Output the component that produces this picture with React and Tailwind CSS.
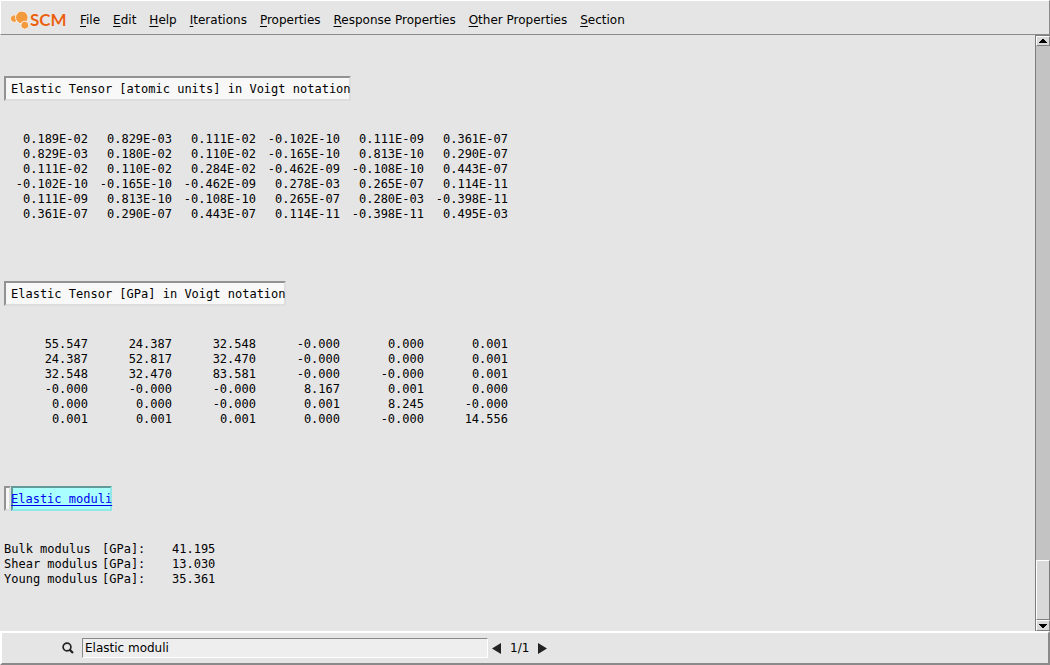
import { useState } from 'react';

const menus = [
  'File',
  'Edit',
  'Help',
  'Iterations',
  'Properties',
  'Response Properties',
  'Other Properties',
  'Section',
];

const atomicUnits = [
  ['0.189E-02', '0.829E-03', '0.111E-02', '-0.102E-10', '0.111E-09', '0.361E-07'],
  ['0.829E-03', '0.180E-02', '0.110E-02', '-0.165E-10', '0.813E-10', '0.290E-07'],
  ['0.111E-02', '0.110E-02', '0.284E-02', '-0.462E-09', '-0.108E-10', '0.443E-07'],
  ['-0.102E-10', '-0.165E-10', '-0.462E-09', '0.278E-03', '0.265E-07', '0.114E-11'],
  ['0.111E-09', '0.813E-10', '-0.108E-10', '0.265E-07', '0.280E-03', '-0.398E-11'],
  ['0.361E-07', '0.290E-07', '0.443E-07', '0.114E-11', '-0.398E-11', '0.495E-03'],
];

const gigaPascal = [
  ['55.547', '24.387', '32.548', '-0.000', '0.000', '0.001'],
  ['24.387', '52.817', '32.470', '-0.000', '0.000', '0.001'],
  ['32.548', '32.470', '83.581', '-0.000', '-0.000', '0.001'],
  ['-0.000', '-0.000', '-0.000', '8.167', '0.001', '0.000'],
  ['0.000', '0.000', '-0.000', '0.001', '8.245', '-0.000'],
  ['0.001', '0.001', '0.001', '0.000', '-0.000', '14.556'],
];

const moduli = [
  ['Bulk modulus', '41.195'],
  ['Shear modulus', '13.030'],
  ['Young modulus', '35.361'],
];

function Logo() {
  return (
    <div className="flex items-center">
      <svg width="20" height="20" viewBox="0 0 20 20" aria-hidden="true">
        <g fill="#f39a3f" stroke="#f6f1ec" strokeWidth="1">
          <circle cx="4.2" cy="8.6" r="3.8" />
          <circle cx="11.8" cy="7.4" r="6.3" />
          <circle cx="14.8" cy="15.2" r="4" />
        </g>
      </svg>
      <span className="font-['Lato','Open_Sans',sans-serif] text-[17px] leading-5 font-bold text-[#e8610f] [text-shadow:0_0_1px_#fff]">
        SCM
      </span>
    </div>
  );
}

function MenuBar() {
  return (
    <header className="flex h-[35px] shrink-0 items-center border border-t-white border-r-[#8a8a8a] border-b-[#8a8a8a] border-l-white pt-1 pl-[9px]">
      <div className="w-[70px]">
        <Logo />
      </div>
      <nav className="flex gap-[13px]">
        {menus.map((name) => (
          <button key={name} type="button" className="leading-4 whitespace-nowrap">
            <span className="underline underline-offset-2">{name[0]}</span>
            {name.slice(1)}
          </button>
        ))}
      </nav>
    </header>
  );
}

const sunken = 'border-2 border-t-[#929292] border-r-[#dedede] border-b-[#dedede] border-l-[#929292] bg-[#f8f8f8]';

function Heading({ children }) {
  return (
    <h2 className={`w-fit pt-1 pb-0.5 pl-[5px] whitespace-nowrap ${sunken}`}>
      <span className="-mr-0.5">{children}</span>
    </h2>
  );
}

function Tensor({ title, rows }) {
  return (
    <section>
      <Heading>{title}</Heading>
      <table className="mt-[31px] w-[504px] table-fixed text-right">
        <tbody>
          {rows.map((row, i) => (
            <tr key={i}>
              {row.map((value, j) => (
                <td key={j} className="p-0">
                  {value}
                </td>
              ))}
            </tr>
          ))}
        </tbody>
      </table>
    </section>
  );
}

function Moduli() {
  return (
    <section>
      <h2 className="flex w-fit whitespace-nowrap">
        <span className={`w-[7px] ${sunken}`} />
        <a
          href="#moduli"
          className="border-2 border-t-[#629a9a] border-r-[#92e8e8] border-b-[#92e8e8] border-l-[#629a9a] bg-[#aaffff] pt-1 pb-0.5 text-[#0000ee] underline underline-offset-2"
        >
          <span className="-mx-0.5">Elastic moduli</span>
        </a>
      </h2>
      <table id="moduli" className="mt-[31px] table-fixed">
        <tbody>
          {moduli.map(([label, value]) => (
            <tr key={label}>
              <th scope="row" className="w-[98px] p-0 text-left font-normal">
                {label}
              </th>
              <td className="w-[42px] p-0">[GPa]:</td>
              <td className="w-[70px] p-0 text-right">{value}</td>
            </tr>
          ))}
        </tbody>
      </table>
    </section>
  );
}

const raised = 'border border-t-white border-l-white border-r-[#7d7d7d] border-b-[#7d7d7d] bg-[#d9d9d9]';

function ScrollBar() {
  return (
    <div className="flex w-[15px] shrink-0 flex-col border-t border-l border-[#7d7d7d] bg-[#c3c3c3]">
      <button type="button" aria-label="Scroll up" className={`flex h-[10px] items-center justify-center ${raised}`}>
        <svg width="8" height="4" viewBox="0 0 8 4" shapeRendering="crispEdges" aria-hidden="true">
          <path d="M3 0h2v1h1v1h1v1h1v1H0V3h1V2h1V1h1z" />
        </svg>
      </button>
      <div className="flex-1" />
      <div className={`h-[60px] ${raised}`} />
      <button type="button" aria-label="Scroll down" className={`flex h-[11px] items-center justify-center ${raised}`}>
        <svg width="8" height="4" viewBox="0 0 8 4" shapeRendering="crispEdges" aria-hidden="true">
          <path d="M0 0h8v1H7v1H6v1H5v1H3V3H2V2H1V1H0z" />
        </svg>
      </button>
    </div>
  );
}

function SearchBar() {
  const [query, setQuery] = useState('Elastic moduli');
  return (
    <footer className="flex h-[34px] shrink-0 items-center border-2 border-t-white border-r-[#8a8a8a] border-b-[#8a8a8a] border-l-white pl-[60px]">
      <label htmlFor="search" aria-label="Search">
        <svg width="12" height="12" viewBox="0 0 12 12" fill="none" stroke="#222" aria-hidden="true">
          <circle cx="5" cy="5" r="3.9" strokeWidth="1.7" />
          <path d="M7.6 7.6L11 11" strokeWidth="2.2" />
        </svg>
      </label>
      <input
        id="search"
        value={query}
        onChange={(e) => setQuery(e.target.value)}
        className="ml-2 h-5 w-[406px] border border-t-[#8a8a8a] border-r-white border-b-white border-l-[#8a8a8a] bg-[#eeeeee] px-0.5 outline-none"
      />
      <button type="button" aria-label="Previous match" className="ml-1">
        <svg width="9" height="11" viewBox="0 0 9 11" fill="#222" aria-hidden="true">
          <path d="M9 0v11L0 5.5z" />
        </svg>
      </button>
      <output className="mx-[9px]">1/1</output>
      <button type="button" aria-label="Next match">
        <svg width="9" height="11" viewBox="0 0 9 11" fill="#222" aria-hidden="true">
          <path d="M0 0v11l9-5.5z" />
        </svg>
      </button>
    </footer>
  );
}

export default function App() {
  return (
    <div className="flex h-screen flex-col bg-[#e5e5e5] font-['DejaVu_Sans',sans-serif] text-[12px] text-black">
      <MenuBar />
      <div className="flex min-h-0 flex-1">
        <main className="flex flex-1 flex-col gap-[59px] overflow-hidden pt-[41px] pl-1 font-['DejaVu_Sans_Mono',monospace] leading-[15px]">
          <Tensor title="Elastic Tensor [atomic units] in Voigt notation" rows={atomicUnits} />
          <Tensor title="Elastic Tensor [GPa] in Voigt notation" rows={gigaPascal} />
          <Moduli />
        </main>
        <ScrollBar />
      </div>
      <SearchBar />
    </div>
  );
}
